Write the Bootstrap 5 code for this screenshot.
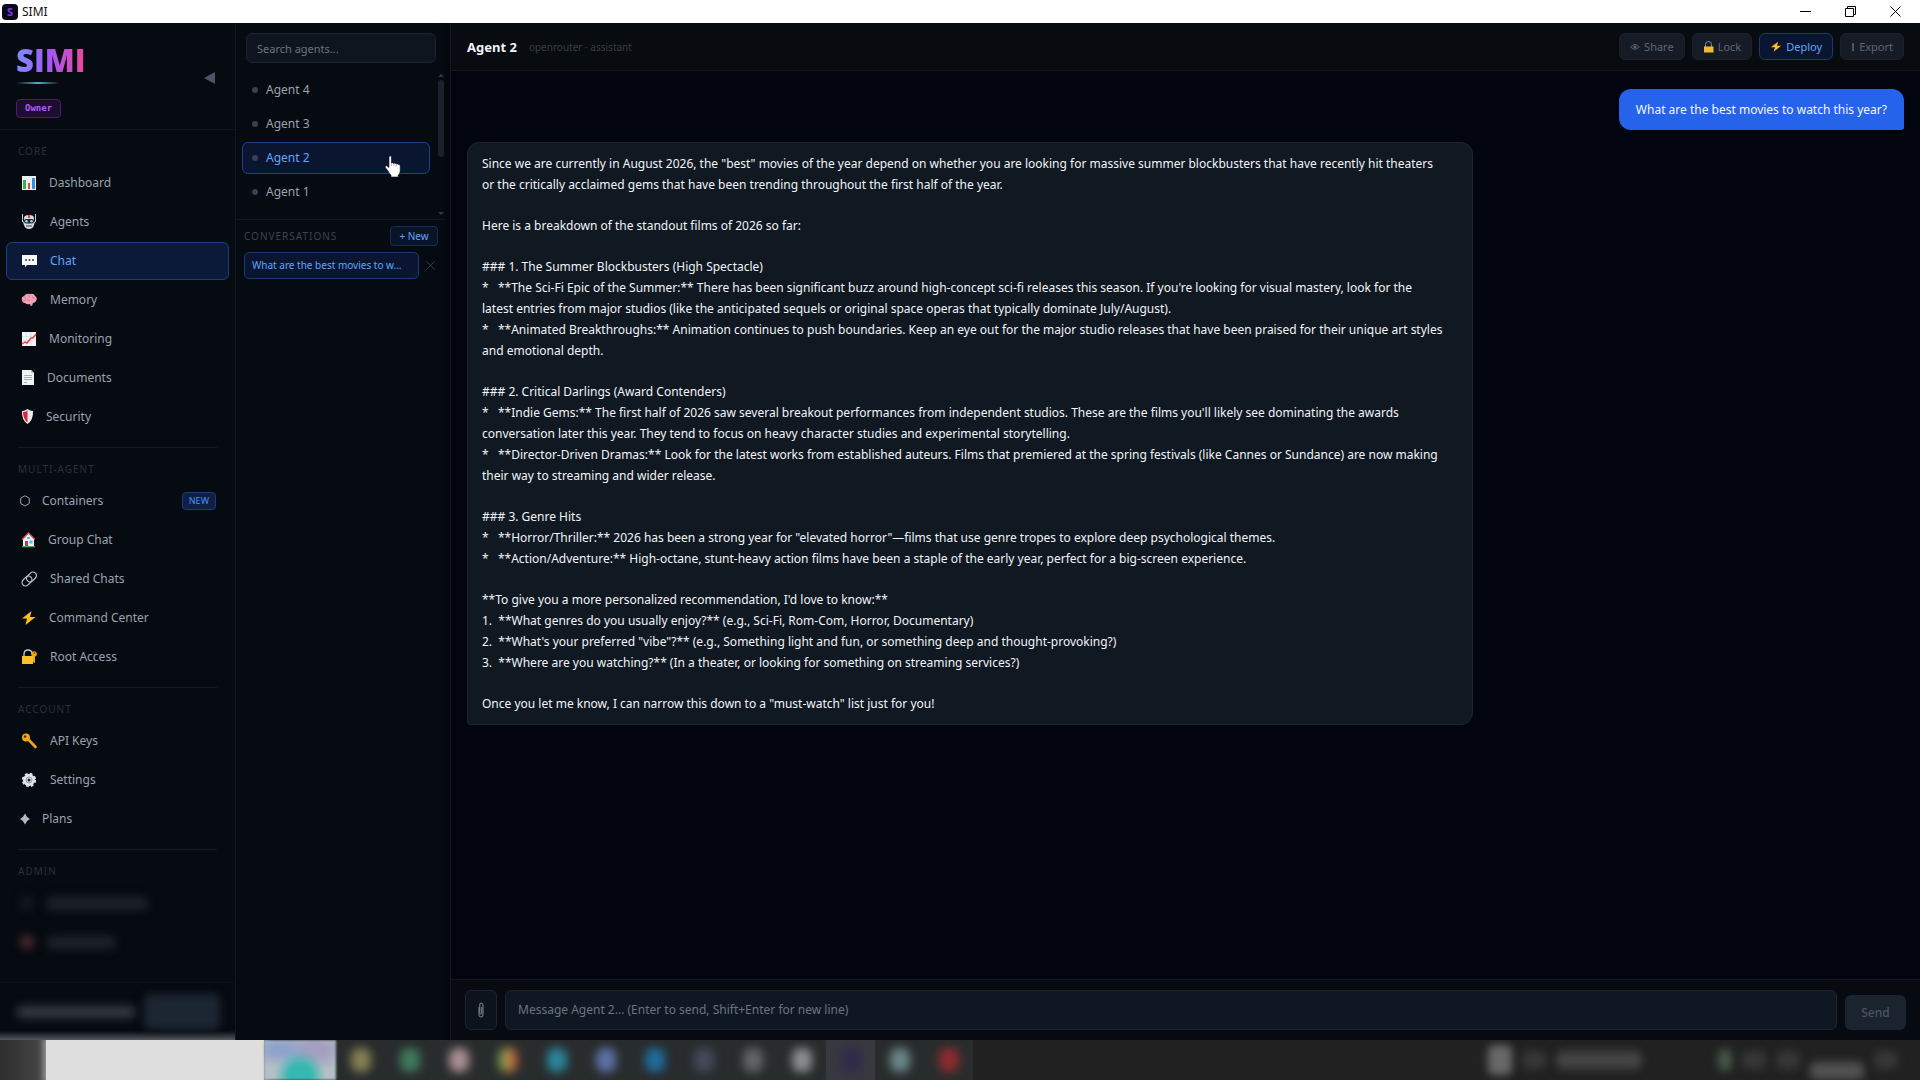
<!DOCTYPE html>
<html lang="en">
<head>
<meta charset="utf-8">
<meta name="viewport" content="width=device-width, initial-scale=1">
<title>SIMI</title>
<link href="https://cdn.jsdelivr.net/npm/bootstrap@5.3.0/dist/css/bootstrap.min.css" rel="stylesheet">
<style>
  :root { --ui: "Noto Sans", "Open Sans", sans-serif; --line: #12171f; --muted: #99a3b0; --blue: #60a5fa; }
  body { font-family: var(--ui); font-size: 12px; line-height: 18px; background: #02050f; color: var(--muted); }
  a { color: inherit; text-decoration: none; }
  button { font-family: inherit; }
  svg { display: block; flex: none; }

  /* window frame */
  .win-bar { height: 23px; background: #fff; color: #111; padding: 0 2px; }
  .win-icon { width: 16px; height: 16px; border-radius: 4px; background: #0b0a18; color: #7c3aed; font: 700 11px/16px var(--ui); text-align: center; }
  .win-btn { width: 45px; height: 23px; background: none; border: 0; padding: 0; color: #000; }

  /* sidebar */
  .side { width: 236px; background: #060a11; border-right: 1px solid var(--line); }
  .brand-box { height: 107px; padding: 19px 20px 0 16px; border-bottom: 1px solid var(--line); }
  .brand-name { font: 800 31px/36px "Open Sans", sans-serif; background: linear-gradient(90deg, #7c8cff, #a855f7 50%, #ec4899); -webkit-background-clip: text; background-clip: text; color: transparent; margin: 0; }
  .brand-rule { width: 44px; height: 2px; margin: 4px 0 14px; background: linear-gradient(90deg, transparent, #5fa8c8, transparent); }
  .role-tag { display: inline-block; height: 19px; padding: 0 8px; border: 1px solid #47206b; border-radius: 4px; background: #1d0d31; color: #b65cf5; font: 700 9px/17px "DejaVu Sans Mono", monospace; }
  .fold-btn { background: none; border: 0; padding: 6px 0; margin-top: 24px; color: #4b5563; }
  .group { padding-bottom: 10px; }
  .group + .group::before { content: ""; display: block; height: 1px; margin: 0 18px; background: #141a20; }
  .group-name { font-size: 10px; line-height: 15px; letter-spacing: 1px; color: #2b313b; padding: 14px 18px 5px; margin: 0; font-weight: 400; }
  .item { height: 38px; margin: 0 6px 1px; padding: 0 12px 0 13px; border: 1px solid transparent; border-radius: 6px; gap: 12px; font-size: 12px; }
  .item.on { background: #0b1a38; border-color: #1c3f7c; color: var(--blue); }
  .new-tag { height: 18px; padding: 0 6px; border: 1px solid #1d3c74; border-radius: 4px; background: #0d1f44; color: #4f8ff0; font-size: 9px; line-height: 16px; }
  .hid { height: 13px; border-radius: 6px; background: #1e222c; filter: blur(5px); }
  .hid.long { width: 102px; }
  .hid.short { width: 70px; }
  .hid-icon { width: 14px; height: 14px; border-radius: 7px; background: #161a22; filter: blur(5px); }
  .hid-icon.red { background: #4f2c31; }
  .side-foot { height: 58px; border-top: 1px solid #0b1017; padding: 0 15px 0 16px; background: linear-gradient(transparent 84%, #55585c); }
  .hid-user { height: 12px; background: #353a41; border-radius: 6px; filter: blur(5px); }
  .hid-btn { width: 76px; height: 36px; background: #1c2632; border-radius: 6px; filter: blur(4px); }

  /* agents column */
  .agents { width: 209px; background: #060a11; }
  .gutter { width: 6px; background: #04070d; border-right: 1px solid var(--line); }
  .find { margin: 10px 9px 0 10px; height: 30px; padding: 0 10px; font-size: 11px; color: #99a3b0; background: #0e151e; border: 1px solid #1c2430; border-radius: 6px; }
  .find::placeholder, .ask::placeholder { color: #6b7480; opacity: 1; }
  .find:focus, .ask:focus { outline: none; border-color: #1c3f7c; }
  .agent-list { padding: 9px 0 2px 6px; border-bottom: 1px solid var(--line); }
  .agent-rows { padding: 2px 0 7px; }
  .agent { height: 32px; margin-bottom: 2px; padding: 0 9px; gap: 8px; border: 1px solid transparent; border-radius: 6px; }
  .agent.on { background: #0a1530; border-color: #1f4387; color: var(--blue); }
  .dot { width: 6px; height: 6px; border-radius: 3px; background: #3a414c; }
  .bar { width: 15px; padding-left: 8px; }
  .thumb { height: 77px; width: 6px; border-radius: 3px; background: #1a212b; }
  .conv-head { font-size: 10px; letter-spacing: 1px; color: #3d4550; padding: 6px 7px 6px 8px; }
  .new-btn { height: 20px; width: 48px; padding: 0; font-size: 10px; line-height: 18px; color: var(--blue); background: #0a1427; border: 1px solid #152d58; border-radius: 4px; letter-spacing: 0; }
  .conv { padding: 0 10px 0 8px; }
  .conv-link { width: 175px; height: 27px; padding: 0 7px; font-size: 10px; line-height: 25px; color: var(--blue); background: #0a1631; border: 1px solid #1a3a75; border-radius: 5px; }
  .x-btn { background: none; border: 0; padding: 0; color: #333b46; }
  .hand { position: absolute; left: 141px; top: 12px; pointer-events: none; }

  /* chat */
  .top { height: 48px; padding: 0 16px; background: #080b10; border-bottom: 1px solid var(--line); gap: 7px; }
  .top h1 { font-size: 13px; line-height: 18px; font-weight: 700; color: #f1f5f9; margin: 0; }
  .top small { font-size: 10px; color: #373e49; margin-left: 5px; }
  .act { height: 27px; padding: 0 10px; gap: 4px; font-size: 11px; line-height: 25px; color: #5d6673; background: #161c26; border: 1px solid #1a202b; border-radius: 6px; }
  .act.go { color: var(--blue); background: #0a1530; border-color: #1b3a74; }
  .feed { padding: 18px 16px; gap: 12px; }
  .msg { border-radius: 12px; font-size: 12px; line-height: 21px; }
  .msg.me { background: #2563eb; color: #f4f7fb; padding: 10px 17px; border-bottom-right-radius: 3px; }
  .msg.bot { width: 70%; background: #101822; border: 1px solid #1c2430; color: #f1f4f8; padding: 10px 14px; border-bottom-left-radius: 3px; }
  .msg.bot p { margin: 0 0 20px; white-space: pre-wrap; }
  .msg.bot p:last-child { margin: 0; }
  .compose { height: 61px; padding: 10px 14px; gap: 8px; background: #070b11; border-top: 1px solid var(--line); }
  .clip { width: 32px; height: 40px; background: #0d131d; border: 1px solid #1c2430; border-radius: 6px; color: #808893; }
  .ask { height: 40px; resize: none; background: #0f1722; border: 1px solid #1c2430; border-radius: 6px; padding: 10px 12px; font-size: 12px; line-height: 18px; color: #e6eaef; overflow: hidden; }
  .send { width: 61px; height: 35px; border: 0; border-radius: 6px; background: #1a232e; color: #4a5461; font-size: 12px; font-weight: 500; }

  /* desktop taskbar, out of focus */
  .task { height: 40px; background: #212121; overflow: hidden; }
  .start { width: 46px; background: linear-gradient(90deg, #2e2e2e, #484848); }
  .seek { width: 218px; background: #dedede; box-shadow: 0 0 6px 3px #9a9a9a; }
  .scene { width: 72px; background: radial-gradient(ellipse at 50% 90%, #35b8b2 0 22%, transparent 50%), radial-gradient(ellipse at 22% 25%, #8ea3cc 0 10%, transparent 40%), radial-gradient(ellipse at 70% 25%, #a3a0c0 0 15%, transparent 50%), #b3bfc4; filter: blur(1px); }
  .app { width: 49px; background: #292c2d; }
  .app.cur { background: #38393f; }
  .app i { width: 20px; height: 24px; border-radius: 8px; filter: blur(5px); background: var(--c); }
  .tray { width: 432px; gap: 10px; padding-right: 22px; }
  .tray i { border-radius: 6px; filter: blur(4px); background: #444; height: 18px; }
  .tray .t-pic { width: 24px; height: 30px; background: #686868; }
  .tray .t-sm { width: 24px; background: #373737; }
  .tray .t-text { width: 86px; }
  .tray .t-green { width: 14px; height: 22px; background: #46584a; }
  .tray .t-clock { width: 54px; align-self: flex-end; background: #515151; }
</style>
<script src="https://cdn.jsdelivr.net/npm/bootstrap@5.3.0/dist/js/bootstrap.bundle.min.js"></script>
</head>
<body class="vh-100 d-flex flex-column overflow-hidden">

<header class="win-bar d-flex align-items-center flex-shrink-0">
  <span class="win-icon">S</span><span class="ms-1">SIMI</span>
  <div class="ms-auto d-flex">
    <button class="win-btn d-flex align-items-center justify-content-center" aria-label="Minimize"><svg width="11" height="11" stroke="currentColor"><path d="M0 5.500h11"/></svg></button>
    <button class="win-btn d-flex align-items-center justify-content-center" aria-label="Restore"><svg width="11" height="11" fill="none" stroke="currentColor"><path d="M.5 2.500h8v8h-8zM2.500 2.500v-2h8v8h-2"/></svg></button>
    <button class="win-btn d-flex align-items-center justify-content-center" aria-label="Close"><svg width="11" height="11" stroke="currentColor"><path d="M.5.5l10 10M10.500.5l-10 10"/></svg></button>
  </div>
</header>

<div class="d-flex flex-grow-1 overflow-hidden">
  <aside class="side d-flex flex-column flex-shrink-0">
    <div class="brand-box d-flex justify-content-between flex-shrink-0">
      <div>
        <p class="brand-name">SIMI</p>
        <div class="brand-rule"></div>
        <span class="role-tag">Owner</span>
      </div>
      <button class="fold-btn align-self-start" aria-label="Collapse sidebar"><svg width="11" height="12" fill="currentColor"><path d="M11 0v12L0 6z"/></svg></button>
    </div>

    <nav class="flex-grow-1 overflow-hidden">
      <div class="group">
        <h2 class="group-name">CORE</h2>
        <a href="#" class="item d-flex align-items-center"><svg width="17" height="16" viewBox="0 0 17 16"><path fill="#eef1f4" d="M2 1h14v14H2z"/><path fill="#35b34a" d="M3 5h3v9H3z"/><path fill="#e2483d" d="M8 8h2v6H8z"/><path fill="#3a8ddd" d="M12 3h3v11h-3z"/></svg>Dashboard</a>
        <a href="#" class="item d-flex align-items-center"><svg width="18" height="16" viewBox="0 0 18 16"><path d="M2.500 0v8M15.500 0v8" stroke="#c9cdd2"/><path fill="#d6d9dc" d="M4 4q0-3 5-3t5 3v3l1 1-1 3q-1 4-5 4t-5-4L3 8l1-1z"/><path fill="#e04444" d="M8 1h2v3H8z"/><rect x="4" y="5" width="10" height="4.500" rx="2" fill="#1f2a33"/><circle cx="6.500" cy="7.200" r="1.300" fill="#8fe0ea"/><circle cx="11.500" cy="7.200" r="1.300" fill="#8fe0ea"/><path stroke="#39434b" d="M6 12h6"/></svg>Agents</a>
        <a href="#" class="item on d-flex align-items-center"><svg width="18" height="16" viewBox="0 0 18 16"><path fill="#f7f8fa" d="M2 2h15v10H7l-2 2.500V12H2z"/><g fill="#39404a"><circle cx="6" cy="7" r="1"/><circle cx="9.500" cy="7" r="1"/><circle cx="13" cy="7" r="1"/></g></svg>Chat</a>
        <a href="#" class="item d-flex align-items-center"><svg width="18" height="16" viewBox="0 0 18 16"><path fill="#f2a1b4" d="M2 8q-1-3 2-4 2-3 6-2 4-1 5 2 3 2 1 5-1 2-3 2l-1 3q-2 0-2-2-3 1-5-1-3 0-3-3z"/><path fill="none" stroke="#c96f88" stroke-width=".8" d="M4 5q2 0 2 2M8 2.500q0 2 2 2.500M7 8q2-1 3 1M12 5q2 0 2 2M3 8.500h3"/></svg>Memory</a>
        <a href="#" class="item d-flex align-items-center"><svg width="17" height="16" viewBox="0 0 17 16"><path fill="#f3f4f6" d="M2 1h14v14H2z"/><path stroke="#cfd8df" stroke-width=".6" d="M2 5.500h14M2 10h14M6.500 1v14M11 1v14"/><path fill="none" stroke="#e0453f" stroke-width="1.400" d="M2 13l3-2 2 1 4-5 2 0 3-4"/></svg>Monitoring</a>
        <a href="#" class="item d-flex align-items-center"><svg width="15" height="16" viewBox="0 0 15 16"><path fill="#f1f2f4" d="M2 0h9l3 3v12H2z"/><path fill="#b9bfc6" d="M11 0l3 3h-3z"/><path stroke="#aab0b8" d="M4 5.500h8M4 7.500h8M4 9.500h8M4 12.500h3"/></svg>Documents</a>
        <a href="#" class="item d-flex align-items-center"><svg width="14" height="16" viewBox="0 0 14 16"><path fill="#e9eaec" d="M7.500 0Q10 2 13 2q.5 9-5.500 13Q1.500 11 2 2q3 0 5.500-2z"/><path fill="#d9263c" d="M7.500 1.500v12Q3 10 3 3q2.500 0 4.500-1.500z"/></svg>Security</a>
      </div>
      <div class="group">
        <h2 class="group-name">MULTI-AGENT</h2>
        <a href="#" class="item d-flex align-items-center"><svg width="10" height="12" viewBox="0 0 10 12"><path fill="none" stroke="#99a3b0" d="M5 .7l4.300 2.500v5.200L5 11 .7 8.400V3.200z"/></svg>Containers<span class="new-tag ms-auto">NEW</span></a>
        <a href="#" class="item d-flex align-items-center"><svg width="16" height="16" viewBox="0 0 16 16"><path fill="#eef0f2" d="M3 7l5.500-6L14 7v7H3z"/><path fill="none" stroke="#d2544c" stroke-width="1.300" d="M2 7.500L8.500 1 15 7.500"/><path fill="#b4413a" d="M5 9h3v5H5z"/><path fill="#64b5e8" d="M9.500 8.500h3v3h-3zM7 5h3v2H7z"/><path fill="#48a852" d="M2 14h13v1.300H2z"/></svg>Group Chat</a>
        <a href="#" class="item d-flex align-items-center"><svg width="18" height="16" viewBox="0 0 18 16"><g fill="none" stroke="#b9bfc7" stroke-width="1.300"><rect x="6" y="2.500" width="11" height="7" rx="3.500" transform="rotate(-45 11.500 6)"/><rect x="1.500" y="6.500" width="11" height="7" rx="3.500" transform="rotate(-45 7 10)"/></g></svg>Shared Chats</a>
        <a href="#" class="item d-flex align-items-center"><svg width="17" height="16" viewBox="0 0 17 16"><path fill="#fbbf24" d="M11.500 1L2 8.500h5L5.500 15 15.500 7h-5.500z"/></svg>Command Center</a>
        <a href="#" class="item d-flex align-items-center"><svg width="18" height="16" viewBox="0 0 18 16"><path fill="none" stroke="#c7cbd1" stroke-width="1.300" d="M4 8V5q0-4 4-4t4 4"/><path fill="#fbc02d" d="M2 7h11v8H2z"/><circle cx="14" cy="5" r="2.800" fill="#f0a51c"/><path fill="#f0a51c" d="M13 7h2v7l-2-1z"/><circle cx="14.500" cy="4" r=".8" fill="#5b3a06"/></svg>Root Access</a>
      </div>
      <div class="group">
        <h2 class="group-name">ACCOUNT</h2>
        <a href="#" class="item d-flex align-items-center"><svg width="18" height="16" viewBox="0 0 18 16"><path fill="none" stroke="#f0a51c" stroke-width="2.600" stroke-linecap="round" d="M8 6l7.500 8"/><circle cx="6" cy="4.500" r="4" fill="#f0a51c"/><circle cx="5" cy="3.500" r="1.200" fill="#4a2f05"/></svg>API Keys</a>
        <a href="#" class="item d-flex align-items-center"><svg width="18" height="16" viewBox="0 0 18 16"><circle cx="9" cy="8" r="6" fill="#e3e5e8"/><circle cx="9" cy="8" r="6.300" fill="none" stroke="#e3e5e8" stroke-width="1.800" stroke-dasharray="2.800 2.150"/><circle cx="9" cy="8" r="3" fill="none" stroke="#9299a2"/><circle cx="9" cy="8" r="1.500" fill="#20262f"/></svg>Settings</a>
        <a href="#" class="item d-flex align-items-center"><svg width="10" height="12" viewBox="0 0 10 12"><path fill="#b3bac4" d="M5 .5Q6.500 4.500 10 6 6.500 7.500 5 11.500 3.500 7.500 0 6 3.500 4.500 5 .5z"/></svg>Plans</a>
      </div>
      <div class="group">
        <h2 class="group-name">ADMIN</h2>
        <div class="item d-flex align-items-center"><span class="hid-icon"></span><span class="hid long"></span></div>
        <div class="item d-flex align-items-center"><span class="hid-icon red"></span><span class="hid short"></span></div>
      </div>
    </nav>
    <div class="side-foot d-flex align-items-center gap-2 flex-shrink-0"><span class="hid-user flex-grow-1"></span><span class="hid-btn"></span></div>
  </aside>

  <section class="agents d-flex flex-column flex-shrink-0">
    <input class="find" type="search" placeholder="Search agents..." aria-label="Search agents">
    <div class="agent-list d-flex justify-content-between">
      <div class="agent-rows flex-grow-1">
        <a href="#" class="agent d-flex align-items-center"><span class="dot"></span>Agent 4</a>
        <a href="#" class="agent d-flex align-items-center"><span class="dot"></span>Agent 3</a>
        <a href="#" class="agent on d-flex align-items-center position-relative"><span class="dot"></span>Agent 2
          <svg class="hand" width="18" height="23" viewBox="0 0 18 23"><path fill="#fff" stroke="#10131a" stroke-width=".6" d="M5 1.500q1.500-1.300 2.400.3V8q1-.8 2.300.4 1.200-.8 2.300.5 1.200-.7 2.200.6 1.600-.4 2 1.200v5q0 3-2 4.500V22H7v-2q-2-1.500-3-4l-2.700-3.500q-.6-2 1.400-1.700L5 12.500z"/><path stroke="#8a8f98" stroke-width=".7" d="M7.600 8v3M10 8.800v2.500M12.300 9.500v2"/></svg></a>
        <a href="#" class="agent d-flex align-items-center"><span class="dot"></span>Agent 1</a>
      </div>
      <div class="bar d-flex flex-column">
        <svg width="6" height="8" fill="#303843"><path d="M0 5l3-3 3 3z"/></svg>
        <div class="thumb"></div>
        <svg class="mt-auto" width="6" height="8" fill="#303843"><path d="M0 3l3 3 3-3z"/></svg>
      </div>
    </div>
    <div class="conv-head d-flex align-items-center justify-content-between">CONVERSATIONS<button class="new-btn">+ New</button></div>
    <div class="conv d-flex align-items-center justify-content-between">
      <a href="#" class="conv-link text-truncate">What are the best movies to w...</a>
      <button class="x-btn" aria-label="Delete conversation"><svg width="9" height="9" stroke="currentColor"><path d="M.5.5l8 8M8.500.5l-8 8"/></svg></button>
    </div>
  </section>
  <div class="gutter flex-shrink-0"></div>

  <main class="d-flex flex-column flex-grow-1 overflow-hidden">
    <div class="top d-flex align-items-center flex-shrink-0">
      <h1>Agent 2</h1><small>openrouter · assistant</small>
      <button class="act d-flex align-items-center ms-auto"><svg width="10" height="8" viewBox="0 0 11 8"><path fill="none" stroke="#5d6673" d="M.7 4Q5.500-1.500 10.300 4 5.500 9 .7 4z"/><circle cx="5.500" cy="4" r="1.700" fill="#5d6673"/></svg>Share</button>
      <button class="act d-flex align-items-center"><svg width="11" height="12" viewBox="0 0 11 12"><path fill="none" stroke="#8b9098" d="M2.500 6V3.500q0-3 3-3t3 3V6"/><path fill="#f4b92f" d="M1 5.500h9.500v6H1z"/></svg>Lock</button>
      <button class="act go d-flex align-items-center"><svg width="12" height="11" viewBox="0 0 17 16"><path fill="#fbbf24" d="M11.500 1L1 9h6l-2 6.500L16 7h-6z"/></svg>Deploy</button>
      <button class="act d-flex align-items-center"><svg width="4" height="10" viewBox="0 0 4 10"><path fill="#4c5562" d="M1 1h2v8H1z"/></svg>Export</button>
    </div>

    <div class="feed d-flex flex-column flex-grow-1 overflow-hidden">
      <div class="msg me align-self-end">What are the best movies to watch this year?</div>
      <div class="msg bot"><p>Since we are currently in August 2026, the "best" movies of the year depend on whether you are looking for massive summer blockbusters that have recently hit theaters
or the critically acclaimed gems that have been trending throughout the first half of the year.</p><p>Here is a breakdown of the standout films of 2026 so far:</p><p>### 1. The Summer Blockbusters (High Spectacle)
*   **The Sci-Fi Epic of the Summer:** There has been significant buzz around high-concept sci-fi releases this season. If you're looking for visual mastery, look for the
latest entries from major studios (like the anticipated sequels or original space operas that typically dominate July/August).
*   **Animated Breakthroughs:** Animation continues to push boundaries. Keep an eye out for the major studio releases that have been praised for their unique art styles
and emotional depth.</p><p>### 2. Critical Darlings (Award Contenders)
*   **Indie Gems:** The first half of 2026 saw several breakout performances from independent studios. These are the films you'll likely see dominating the awards
conversation later this year. They tend to focus on heavy character studies and experimental storytelling.
*   **Director-Driven Dramas:** Look for the latest works from established auteurs. Films that premiered at the spring festivals (like Cannes or Sundance) are now making
their way to streaming and wider release.</p><p>### 3. Genre Hits
*   **Horror/Thriller:** 2026 has been a strong year for "elevated horror"—films that use genre tropes to explore deep psychological themes.
*   **Action/Adventure:** High-octane, stunt-heavy action films have been a staple of the early year, perfect for a big-screen experience.</p><p>**To give you a more personalized recommendation, I'd love to know:**
1.  **What genres do you usually enjoy?** (e.g., Sci-Fi, Rom-Com, Horror, Documentary)
2.  **What's your preferred "vibe"?** (e.g., Something light and fun, or something deep and thought-provoking?)
3.  **Where are you watching?** (In a theater, or looking for something on streaming services?)</p><p>Once you let me know, I can narrow this down to a "must-watch" list just for you!</p></div>
    </div>

    <form class="compose d-flex align-items-end flex-shrink-0">
      <button type="button" class="clip d-flex align-items-center justify-content-center p-0" aria-label="Attach file"><svg width="6" height="16" viewBox="0 0 6 16"><path fill="none" stroke="currentColor" d="M1 5v8q0 2 2 2t2-2V3q0-2-1.800-2T1.800 3v8q0 1 1 1t1-1V5"/></svg></button>
      <textarea class="ask flex-grow-1" rows="1" placeholder="Message Agent 2... (Enter to send, Shift+Enter for new line)" aria-label="Message Agent 2"></textarea>
      <button type="submit" class="send">Send</button>
    </form>
  </main>
</div>

<footer class="task d-flex flex-shrink-0">
  <div class="start"></div><div class="seek"></div><div class="scene"></div>
  <div class="app d-flex align-items-center justify-content-center" style="--c:#858052"><i></i></div>
  <div class="app d-flex align-items-center justify-content-center" style="--c:#417a5c"><i></i></div>
  <div class="app d-flex align-items-center justify-content-center" style="--c:#a98f93"><i></i></div>
  <div class="app d-flex align-items-center justify-content-center" style="--c:linear-gradient(90deg,#4f9a5a,#b8893f,#a8493f)"><i></i></div>
  <div class="app d-flex align-items-center justify-content-center" style="--c:#2a869b"><i></i></div>
  <div class="app d-flex align-items-center justify-content-center" style="--c:#5b72a8"><i></i></div>
  <div class="app d-flex align-items-center justify-content-center" style="--c:#1f6c9c"><i></i></div>
  <div class="app d-flex align-items-center justify-content-center" style="--c:#44485a"><i></i></div>
  <div class="app d-flex align-items-center justify-content-center" style="--c:#626465"><i></i></div>
  <div class="app d-flex align-items-center justify-content-center" style="--c:#8b8e8e"><i></i></div>
  <div class="app cur d-flex align-items-center justify-content-center" style="--c:#30294a"><i></i></div>
  <div class="app d-flex align-items-center justify-content-center" style="--c:#6a8688"><i></i></div>
  <div class="app d-flex align-items-center justify-content-center" style="--c:#8f2b2e"><i></i></div>
  <div class="tray d-flex align-items-center ms-auto">
    <i class="t-pic"></i><i class="t-sm"></i><i class="t-text"></i><i class="t-green ms-auto"></i><i class="t-sm"></i><i class="t-sm"></i><i class="t-clock"></i><i class="t-sm"></i>
  </div>
</footer>
</body>
</html>
